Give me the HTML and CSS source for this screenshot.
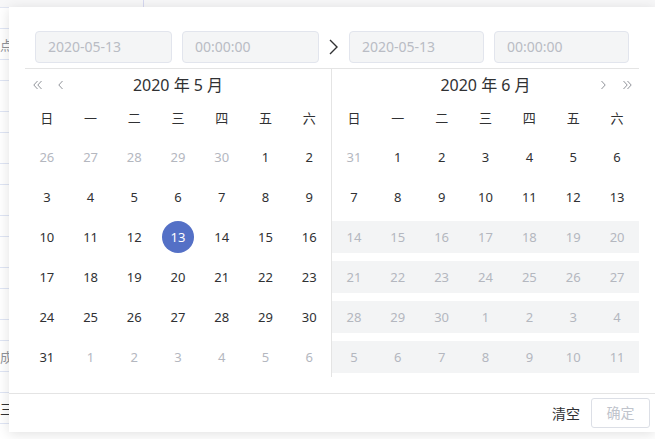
FILE: index.html
```html
<!DOCTYPE html>
<html lang="zh-CN">
<head>
<meta charset="utf-8">
<title>日期时间范围选择</title>
<link rel="stylesheet" href="styles.css">
</head>
<body>
<div class="page">
  <div class="topbar"><div class="topcell"></div></div>
  <div class="rows">
    <div class="row short"></div>
    <div class="row tall"><span class="cut">点</span></div>
    <div class="row short"></div>
    <div class="row tall"></div>
    <div class="row short"></div>
    <div class="row tall"></div>
    <div class="row short"></div>
    <div class="row tall"></div>
    <div class="row short"></div>
    <div class="row tall"></div>
    <div class="row short"></div>
    <div class="row tall"></div>
    <div class="row short"></div>
    <div class="row tall"><span class="cut">成</span></div>
    <div class="row short"></div>
    <div class="row tall"><span class="cut dark">三</span></div>
  </div>
</div>

<div class="picker">
  <div class="body">
    <div class="time-header">
      <div class="input date">2020-05-13</div>
      <div class="input time">00:00:00</div>
      <div class="sep">
        <svg width="9" height="16" viewBox="0 0 9 16"><path d="M1 1 L8 8 L1 15" fill="none" stroke="#303133" stroke-width="1.4"/></svg>
      </div>
      <div class="input date2">2020-05-13</div>
      <div class="input time2">00:00:00</div>
    </div>

    <div class="content">
      <div class="panel left">
        <div class="month-head">
          <div class="btns">
            <svg class="darr" width="9" height="10" viewBox="0 0 9 10"><path d="M4.5 1 L0.8 5 L4.5 9 M8.5 1 L4.8 5 L8.5 9" fill="none" stroke="#909399" stroke-width="1"/></svg>
            <svg class="sarr" width="5" height="10" viewBox="0 0 5 10"><path d="M4.5 1 L0.8 5 L4.5 9" fill="none" stroke="#909399" stroke-width="1"/></svg>
          </div>
          <div class="title">2020 年 5 月</div>
          <div class="btns end"></div>
        </div>
        <div class="grid">
          <div class="wk">日</div><div class="wk">一</div><div class="wk">二</div><div class="wk">三</div><div class="wk">四</div><div class="wk">五</div><div class="wk">六</div>

          <div class="d other"><span>26</span></div><div class="d other"><span>27</span></div><div class="d other"><span>28</span></div><div class="d other"><span>29</span></div><div class="d other"><span>30</span></div><div class="d"><span>1</span></div><div class="d"><span>2</span></div>

          <div class="d"><span>3</span></div><div class="d"><span>4</span></div><div class="d"><span>5</span></div><div class="d"><span>6</span></div><div class="d"><span>7</span></div><div class="d"><span>8</span></div><div class="d"><span>9</span></div>

          <div class="d"><span>10</span></div><div class="d"><span>11</span></div><div class="d"><span>12</span></div><div class="d sel"><span>13</span></div><div class="d"><span>14</span></div><div class="d"><span>15</span></div><div class="d"><span>16</span></div>

          <div class="d"><span>17</span></div><div class="d"><span>18</span></div><div class="d"><span>19</span></div><div class="d"><span>20</span></div><div class="d"><span>21</span></div><div class="d"><span>22</span></div><div class="d"><span>23</span></div>

          <div class="d"><span>24</span></div><div class="d"><span>25</span></div><div class="d"><span>26</span></div><div class="d"><span>27</span></div><div class="d"><span>28</span></div><div class="d"><span>29</span></div><div class="d"><span>30</span></div>

          <div class="d"><span>31</span></div><div class="d other"><span>1</span></div><div class="d other"><span>2</span></div><div class="d other"><span>3</span></div><div class="d other"><span>4</span></div><div class="d other"><span>5</span></div><div class="d other"><span>6</span></div>
        </div>
      </div>

      <div class="panel right">
        <div class="month-head">
          <div class="btns"></div>
          <div class="title">2020 年 6 月</div>
          <div class="btns end">
            <svg class="sarr" width="5" height="10" viewBox="0 0 5 10"><path d="M0.5 1 L4.2 5 L0.5 9" fill="none" stroke="#909399" stroke-width="1"/></svg>
            <svg class="darr" width="9" height="10" viewBox="0 0 9 10"><path d="M0.5 1 L4.2 5 L0.5 9 M4.5 1 L8.2 5 L4.5 9" fill="none" stroke="#909399" stroke-width="1"/></svg>
          </div>
        </div>
        <div class="grid">
          <div class="wk">日</div><div class="wk">一</div><div class="wk">二</div><div class="wk">三</div><div class="wk">四</div><div class="wk">五</div><div class="wk">六</div>

          <div class="d other"><span>31</span></div><div class="d"><span>1</span></div><div class="d"><span>2</span></div><div class="d"><span>3</span></div><div class="d"><span>4</span></div><div class="d"><span>5</span></div><div class="d"><span>6</span></div>

          <div class="d"><span>7</span></div><div class="d"><span>8</span></div><div class="d"><span>9</span></div><div class="d"><span>10</span></div><div class="d"><span>11</span></div><div class="d"><span>12</span></div><div class="d"><span>13</span></div>

          <div class="d dis"><span>14</span></div><div class="d dis"><span>15</span></div><div class="d dis"><span>16</span></div><div class="d dis"><span>17</span></div><div class="d dis"><span>18</span></div><div class="d dis"><span>19</span></div><div class="d dis"><span>20</span></div>

          <div class="d dis"><span>21</span></div><div class="d dis"><span>22</span></div><div class="d dis"><span>23</span></div><div class="d dis"><span>24</span></div><div class="d dis"><span>25</span></div><div class="d dis"><span>26</span></div><div class="d dis"><span>27</span></div>

          <div class="d dis"><span>28</span></div><div class="d dis"><span>29</span></div><div class="d dis"><span>30</span></div><div class="d dis"><span>1</span></div><div class="d dis"><span>2</span></div><div class="d dis"><span>3</span></div><div class="d dis"><span>4</span></div>

          <div class="d dis"><span>5</span></div><div class="d dis"><span>6</span></div><div class="d dis"><span>7</span></div><div class="d dis"><span>8</span></div><div class="d dis"><span>9</span></div><div class="d dis"><span>10</span></div><div class="d dis"><span>11</span></div>
        </div>
      </div>
    </div>
  </div>

  <div class="footer">
    <span class="btn-text">清空</span>
    <span class="btn-plain">确定</span>
  </div>
</div>
</body>
</html>
```

FILE: styles.css
```css
html, body {
  margin: 0;
  padding: 0;
}
body {
  width: 655px;
  height: 439px;
  overflow: hidden;
  position: relative;
  background: #ffffff;
  font-family: "Noto Sans", "Noto Sans CJK SC", sans-serif;
  color: #303133;
}

/* background page */
.page {
  width: 655px;
}
.topbar {
  height: 7px;
  background: #f7f7f8;
  position: relative;
}
.topcell {
  width: 144px;
  height: 7px;
  border-right: 1px solid #d6d8f0;
  box-sizing: border-box;
}
.rows {
  border-top: 1px solid #e2e6f2;
  width: 120px;
}
.row {
  border-bottom: 1px solid #dfe5f4;
  display: flex;
  align-items: center;
  font-size: 13px;
  color: #909399;
}
.row.short { height: 20px; }
.row.tall { height: 30px; }
.cut {
  margin-left: 0;
}
.cut.dark { color: #303133; }

/* picker popup */
.picker {
  position: absolute;
  left: 9px;
  top: 7px;
  width: 646px;
  height: 425px;
  background: #fff;
  box-shadow: 0 2px 12px 0 rgba(0, 0, 0, 0.12);
  display: flex;
  flex-direction: column;
}
.body {
  padding: 0 16px;
  flex: 1;
}
.time-header {
  display: flex;
  align-items: center;
  padding: 24px 10px 5px 10px;
  border-bottom: 1px solid #e4e4e4;
}
.input {
  height: 32px;
  box-sizing: border-box;
  background: #f4f5f6;
  border: 1px solid #e2e5ed;
  border-radius: 4px;
  font-size: 14px;
  line-height: 30px;
  color: #b9bcc4;
  padding-left: 12px;
}
.input.date { width: 137px; }
.input.time { width: 137px; margin-left: 10px; }
.input.date2 { width: 135px; }
.input.time2 { width: 135px; margin-left: 10px; }
.sep {
  width: 30px;
  display: flex;
  justify-content: center;
  align-items: center;
}
.sep svg { display: block; margin-left: -1px; }

.content {
  display: flex;
}
.panel.left {
  width: 306px;
  border-right: 1px solid #e4e4e4;
}
.panel.right {
  width: 307px;
}
.month-head {
  display: grid;
  grid-template-columns: 1fr auto 1fr;
  align-items: center;
  height: 30px;
}
.title {
  font-size: 16px;
  line-height: 30px;
  color: #303133;
  padding-top: 1px;
}
.btns {
  display: flex;
  align-items: center;
  padding-top: 1px;
}
.btns svg { display: block; }
.left .btns .darr { margin-left: 8px; }
.left .btns .sarr { margin-left: 16px; }
.btns.end { justify-content: flex-end; }
.right .btns.end .sarr { margin-right: 17px; }
.right .btns.end .darr { margin-right: 7px; }

.grid {
  display: grid;
  grid-template-columns: repeat(7, 1fr);
}
.wk {
  height: 38px;
  line-height: 38px;
  text-align: center;
  font-size: 13px;
  color: #303133;
}
.d {
  height: 32px;
  padding: 4px 0;
  display: flex;
  justify-content: center;
  align-items: center;
  font-size: 13px;
  color: #303133;
}
.d span {
  width: 32px;
  height: 32px;
  line-height: 32px;
  text-align: center;
  border-radius: 50%;
}
.d.other { color: #b4b7bf; }
.d.dis {
  background: #f3f4f5;
  background-clip: content-box;
  color: #b4b7bf;
}
.d.sel span {
  background: #5470c6;
  color: #fff;
}

.footer {
  border-top: 1px solid #e4e4e4;
  height: 38px;
  display: flex;
  justify-content: flex-end;
  align-items: center;
  padding-right: 5px;
}
.btn-text {
  font-size: 14px;
  color: #303133;
  margin-right: 11px;
}
.btn-plain {
  width: 59px;
  height: 30px;
  box-sizing: border-box;
  border: 1px solid #dcdfe6;
  border-radius: 3px;
  font-size: 14px;
  line-height: 28px;
  text-align: center;
  color: #c0c4cc;
}
```
